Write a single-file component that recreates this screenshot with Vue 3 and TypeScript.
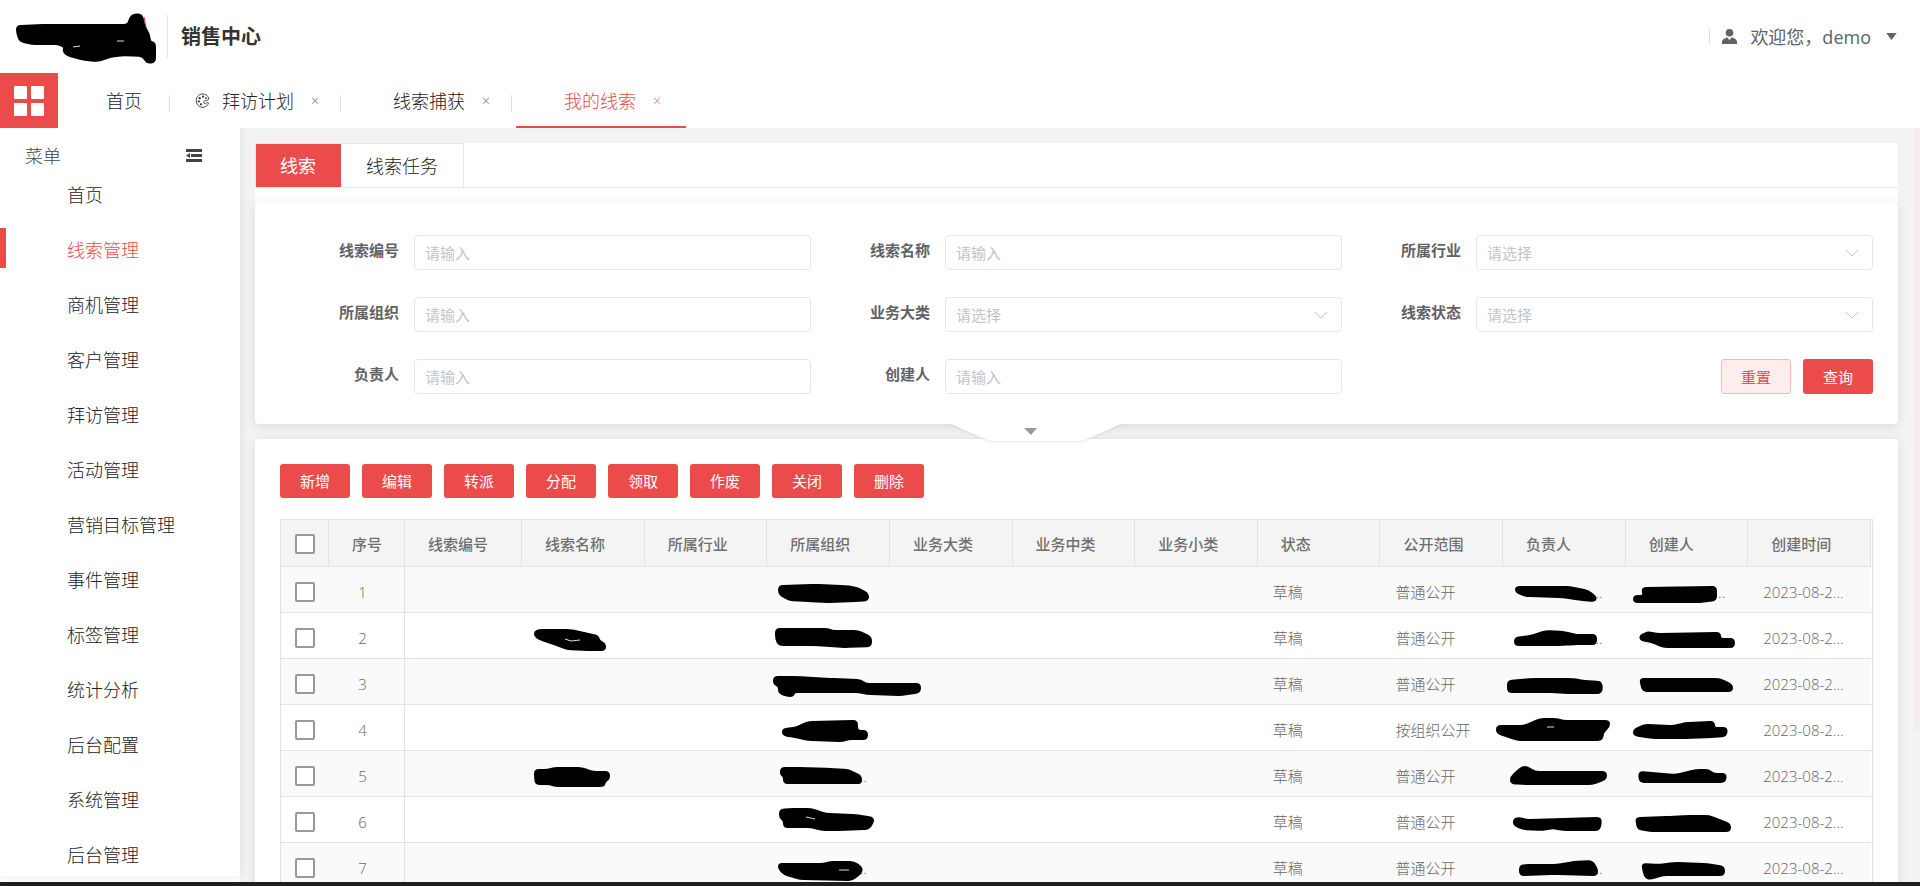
<script setup lang="ts">
import { ref } from 'vue'

interface PageTab {
  name: string
  icon?: boolean
  closable: boolean
}

interface Field {
  id: string
  label: string
  kind: 'input' | 'select'
}

interface Mark {
  shape: string
  gap?: string
  tail?: string
}

interface Lead {
  no: number
  name?: Mark
  org: Mark
  scope: string
  owner: Mark
  creator: Mark
}

// Turns a list of "x,y" corners into a closed outline with rounded corners.
function outline(points: string): string {
  const p = points.split(' ').map((s) => s.split(',').map(Number))
  const toward = (a: number[], b: number[]): string => {
    const len = Math.hypot(b[0] - a[0], b[1] - a[1]) || 1
    const t = Math.min(4, len / 2) / len
    return `${(a[0] + (b[0] - a[0]) * t).toFixed(1)} ${(a[1] + (b[1] - a[1]) * t).toFixed(1)}`
  }
  return p
    .map((c, i) => {
      const prev = p[(i + p.length - 1) % p.length]
      const next = p[(i + 1) % p.length]
      return `${i ? 'L' : 'M'}${toward(c, prev)}Q${c[0]} ${c[1]} ${toward(c, next)}`
    })
    .join('') + 'Z'
}

const logoShape =
  '17,26 47,25 128,25 130,18 134,14 142,15 144,26 149,34 150,42 155,43 155,52 155,62 147,63 143,56 122,55 110,57 98,61 85,60 66,55 63,50 65,47 58,44 32,44 20,41 17,33'

const pageTabs: PageTab[] = [
  { name: '首页', closable: false },
  { name: '拜访计划', icon: true, closable: true },
  { name: '线索捕获', closable: true },
  { name: '我的线索', closable: true },
]
const activePage = ref('我的线索')

const menu = [
  '首页', '线索管理', '商机管理', '客户管理', '拜访管理', '活动管理', '营销目标管理',
  '事件管理', '标签管理', '统计分析', '后台配置', '系统管理', '后台管理',
]
const activeMenu = ref('线索管理')

const panes = ['线索', '线索任务']
const activePane = ref('线索')

const fields: Field[] = [
  { id: 'code', label: '线索编号', kind: 'input' },
  { id: 'name', label: '线索名称', kind: 'input' },
  { id: 'industry', label: '所属行业', kind: 'select' },
  { id: 'org', label: '所属组织', kind: 'input' },
  { id: 'category', label: '业务大类', kind: 'select' },
  { id: 'status', label: '线索状态', kind: 'select' },
  { id: 'owner', label: '负责人', kind: 'input' },
  { id: 'creator', label: '创建人', kind: 'input' },
]

const actions = ['新增', '编辑', '转派', '分配', '领取', '作废', '关闭', '删除']

const headers = [
  '线索编号', '线索名称', '所属行业', '所属组织', '业务大类', '业务中类', '业务小类',
  '状态', '公开范围', '负责人', '创建人', '创建时间',
]

const leads: Lead[] = [
  {
    no: 1,
    scope: '普通公开',
    org: { shape: '12,19 48,18 78,19 91,21 101,27 101,33 92,34 59,35 41,34 22,33 12,27' },
    owner: { shape: '13,20 67,20 85,24 93,30 92,34 78,33 60,30 23,29 13,25', tail: '..' },
    creator: { shape: '16,21 90,20 90,33 74,35 29,35 8,35 8,29 18,29', tail: '..' },
  },
  {
    no: 2,
    scope: '普通公开',
    name: { shape: '13,19 17,17 48,17 76,23 77,28 83,31 83,37 65,37 45,36 29,30 17,26 13,23', gap: 'M43 26L49 28L58 27' },
    org: { shape: '9,16 61,16 65,18 91,18 104,24 104,33 78,34 48,32 12,32 9,26' },
    owner: { shape: '12,25 28,23 43,18 61,19 74,22 93,22 93,31 71,31 60,32 12,32', tail: '..' },
    creator: { shape: '14,23 22,19 31,21 94,20 94,26 108,26 108,34 37,34 26,29 15,27' },
  },
  {
    no: 3,
    scope: '普通公开',
    org: { shape: '7,18 30,18 63,20 94,21 98,25 153,25 153,33 135,36 100,35 92,33 27,33 26,37 20,37 12,34 12,27 7,25' },
    owner: { shape: '5,22 30,20 69,20 82,22 98,23 99,30 97,34 61,34 52,33 5,33' },
    creator: { shape: '14,20 94,20 106,26 106,32 17,32' },
  },
  {
    no: 4,
    scope: '按组织公开',
    org: { shape: '16,24 28,23 41,17 90,16 90,26 100,26 100,34 81,34 76,36 41,35 28,32 16,30' },
    owner: { shape: '-6,21 21,21 37,14 54,14 60,16 106,16 106,22 100,27 99,35 65,35 15,35 -6,28', gap: 'M44 22H51' },
    creator: { shape: '8,25 18,20 48,21 59,18 88,17 88,23 101,23 100,31 85,32 61,33 26,33 8,30' },
  },
  {
    no: 5,
    scope: '普通公开',
    name: { shape: '13,19 26,19 32,17 60,17 70,21 87,21 87,28 83,30 82,35 33,35 28,33 14,33 13,26' },
    org: { shape: '14,17 37,17 63,18 81,19 94,25 94,32 89,32 31,32 17,32 17,25 14,24', tail: '..' },
    owner: { shape: '8,26 19,16 24,16 32,21 103,21 103,28 89,33 19,33 8,32' },
    creator: { shape: '13,21 50,24 70,19 83,19 87,23 100,23 99,31 14,31' },
  },
  {
    no: 6,
    scope: '普通公开',
    org: { shape: '13,13 22,12 44,12 59,17 89,18 106,21 106,26 101,32 68,33 54,33 44,30 17,30 17,23 13,21', gap: 'M39 20L48 22' },
    owner: { shape: '11,22 17,21 23,23 97,21 98,26 96,33 60,33 50,31 39,33 20,32 11,28' },
    creator: { shape: '10,21 44,20 61,19 83,19 104,27 104,34 26,34 12,32' },
  },
  {
    no: 7,
    scope: '普通公开',
    org: { shape: '12,21 18,21 57,21 63,19 87,19 95,25 94,30 85,37 33,36 17,31 12,26', gap: 'M72 27H82', tail: '..' },
    owner: { shape: '17,23 23,22 54,22 71,19 89,18 94,26 94,32 52,31 17,32', tail: '..' },
    creator: { shape: '16,21 33,22 48,20 81,21 98,24 98,32 37,32 24,36 19,34' },
  },
]
</script>

<template>
  <div class="page">
    <header class="top">
      <svg class="logo" viewBox="0 0 167 73" aria-hidden="true">
        <path class="red" d="M144 17L146 28" />
        <path class="ink" :d="outline(logoShape)" />
        <path class="hole" d="M73 47L80 46M117 41H124" />
      </svg>
      <h1>销售中心</h1>
      <div class="user">
        <svg class="person" viewBox="0 0 15 15" aria-hidden="true">
          <circle cx="7.500" cy="3.800" r="3.800" />
          <path d="M0 15V12.500Q.3 10.500 2.500 9.500L5.300 8.300L7.500 11L9.700 8.300L12.500 9.500Q14.700 10.500 15 12.500V15Z" />
        </svg>
        <span>欢迎您，demo</span>
        <svg class="caret" viewBox="0 0 12 8" aria-hidden="true"><path d="M0 0H12L6 8Z" /></svg>
      </div>
    </header>

    <nav class="tabs">
      <button class="apps" aria-label="应用"><i v-for="n in 4" :key="n"></i></button>
      <div
        v-for="tab in pageTabs"
        :key="tab.name"
        class="tab"
        :class="{ active: tab.name === activePage, home: !tab.closable }"
      >
        <span class="tab-icon">
          <svg v-if="tab.icon" viewBox="0 0 16 16" aria-hidden="true">
            <path d="M14.300 5C12.900 1.500 8.500-.2 4.900 1.900C1.200 4.100.2 8.800 2.500 12.200C4.800 15.600 9.600 16.300 12.500 13.700C13.800 12.500 15.300 9.800 13.400 10C12 10.200 11.600 12 10.100 11.300C8.700 10.500 9.300 8.300 11 8.100C12.600 7.900 15.200 8 14.300 5Z" />
            <circle cx="5" cy="5.500" r="1.200" /><circle cx="8.600" cy="3.800" r="1.200" /><circle cx="11.600" cy="5.600" r="1" /><circle cx="4" cy="9" r="1.200" /><circle cx="6.300" cy="12" r="1.200" />
          </svg>
        </span>
        <a href="#" @click.prevent="activePage = tab.name">{{ tab.name }}</a>
        <button v-if="tab.closable" class="close" aria-label="关闭标签">×</button>
      </div>
    </nav>

    <div class="body">
      <div class="side-wrap">
        <aside class="side">
          <div class="side-head">
            <span>菜单</span>
            <svg viewBox="0 0 16 14" aria-hidden="true">
              <path d="M0 0H16V3H0ZM5 5H16V8H5ZM0 10H16V13H0ZM0 6.500L4 4V9Z" />
            </svg>
          </div>
          <a
            v-for="item in menu"
            :key="item"
            href="#"
            :class="{ active: item === activeMenu }"
            @click.prevent="activeMenu = item"
          >{{ item }}</a>
        </aside>
      </div>

      <main class="main">
        <div class="panes">
          <button
            v-for="pane in panes"
            :key="pane"
            :class="{ active: pane === activePane }"
            @click="activePane = pane"
          >{{ pane }}</button>
        </div>

        <form class="card filter" @submit.prevent>
          <div v-for="f in fields" :key="f.id" class="field">
            <label :for="f.id">{{ f.label }}</label>
            <input v-if="f.kind === 'input'" :id="f.id" type="text" placeholder="请输入" />
            <div v-else class="select">
              <select :id="f.id"><option>请选择</option></select>
              <svg viewBox="0 0 14 8" aria-hidden="true"><path d="M1 1L7 7L13 1" /></svg>
            </div>
          </div>
          <div class="submit">
            <button type="reset" class="btn plain">重置</button>
            <button type="submit" class="btn">查询</button>
          </div>
          <button type="button" class="fold" aria-label="展开">
            <svg viewBox="0 0 174 18" aria-hidden="true">
              <path class="flap" d="M0 0H174L141 15Q135 18 128 18H46Q39 18 33 15Z" />
              <path class="tip" d="M75 5H88L82 12Z" />
            </svg>
          </button>
        </form>

        <section class="card list">
          <div class="actions">
            <button v-for="a in actions" :key="a" class="btn">{{ a }}</button>
          </div>
          <table>
            <colgroup>
              <col class="c-check" /><col class="c-no" /><col class="c-code" />
              <col v-for="n in 11" :key="n" />
            </colgroup>
            <thead>
              <tr>
                <th class="check"><input type="checkbox" aria-label="全选" /></th>
                <th class="no">序号</th>
                <th v-for="h in headers" :key="h">{{ h }}</th>
              </tr>
            </thead>
            <tbody>
              <tr v-for="row in leads" :key="row.no">
                <td class="check"><input type="checkbox" :aria-label="`选择第${row.no}行`" /></td>
                <td class="no">{{ row.no }}</td>
                <td></td>
                <td class="mark">
                  <svg v-if="row.name" aria-hidden="true">
                    <path class="ink" :d="outline(row.name.shape)" />
                    <path v-if="row.name.gap" class="hole" :d="row.name.gap" />
                  </svg>
                </td>
                <td></td>
                <td class="mark">
                  {{ row.org.tail }}
                  <svg aria-hidden="true">
                    <path class="ink" :d="outline(row.org.shape)" />
                    <path v-if="row.org.gap" class="hole" :d="row.org.gap" />
                  </svg>
                </td>
                <td></td>
                <td></td>
                <td></td>
                <td>草稿</td>
                <td>{{ row.scope }}</td>
                <td v-for="(m, k) in [row.owner, row.creator]" :key="k" class="mark">
                  {{ m.tail }}
                  <svg aria-hidden="true">
                    <path class="ink" :d="outline(m.shape)" />
                    <path v-if="m.gap" class="hole" :d="m.gap" />
                  </svg>
                </td>
                <td>2023-08-2...</td>
              </tr>
            </tbody>
          </table>
        </section>
      </main>
      <div class="rail"><i></i></div>
    </div>
    <footer class="strip"></footer>
  </div>
</template>

<style>
body {
  margin: 0;
}
</style>

<style scoped>
* {
  box-sizing: border-box;
}
.page {
  height: 100vh;
  display: flex;
  flex-direction: column;
  overflow: hidden;
  background: #fff;
  color: #222;
  font: 300 18px/24px "Open Sans", "Noto Sans CJK SC", sans-serif;
}
button,
input,
select {
  font: inherit;
}
button {
  border: 0;
  padding: 0;
  background: none;
  color: inherit;
  cursor: pointer;
}
a {
  color: inherit;
  text-decoration: none;
}
svg {
  display: block;
}
.ink {
  fill: #000;
  stroke: #000;
  stroke-width: 2;
  stroke-linejoin: round;
}
.hole {
  fill: none;
  stroke: #ddd;
}

.top {
  flex: none;
  height: 73px;
  display: flex;
  align-items: center;
}
.logo {
  width: 167px;
  height: 73px;
}
.red {
  stroke: #e02020;
}
.top h1 {
  margin: 0;
  height: 43px;
  padding-left: 13px;
  border-left: 1px solid #e4e4e4;
  color: #333;
  font-size: 20px;
  line-height: 44px;
  font-weight: 700;
}
.user {
  margin-left: auto;
  margin-right: 23px;
  display: flex;
  align-items: center;
  color: #606266;
}
.user::before {
  content: "";
  width: 1px;
  height: 15px;
  margin-right: 12px;
  background: #dcdfe6;
}
.person {
  width: 15px;
  height: 15px;
  margin-right: 13px;
  fill: #606266;
}
.user span {
  font-weight: 400;
}
.caret {
  width: 11px;
  height: 7px;
  margin-left: 15px;
  fill: #606266;
}

.tabs {
  flex: none;
  height: 55px;
  display: flex;
}
.apps {
  width: 58px;
  height: 55px;
  padding: 13px 14px;
  display: grid;
  grid-template-columns: 13px 13px;
  grid-auto-rows: 13px;
  gap: 4px;
  background: #ec4b4b;
}
.apps i {
  border-radius: 1px;
  background: #fff;
}
.tab {
  position: relative;
  width: 171px;
  padding-left: 25px;
  display: flex;
  align-items: center;
}
.tab.home {
  width: 112px;
  padding-left: 21px;
}
.tab:not(.active)::after {
  content: "";
  position: absolute;
  right: 0;
  top: 22px;
  width: 1px;
  height: 17px;
  background: #dcdfe6;
}
.tab.active {
  color: #ec4b4b;
}
.tab.active::after {
  content: "";
  position: absolute;
  left: 4px;
  bottom: 0;
  width: 170px;
  height: 2px;
  background: #ec4b4b;
}
.tab-icon {
  width: 27px;
}
.tab-icon svg {
  width: 15px;
  height: 15px;
  fill: #333;
}
.tab-icon path {
  fill: none;
  stroke: #333;
}
.close {
  width: 12px;
  margin-left: 15px;
  font-size: 14px;
  color: #777;
}
.active .close {
  color: #ec7777;
}

.body {
  flex: 1;
  min-height: 0;
  display: flex;
  overflow: hidden;
}
.side-wrap {
  width: 240px;
  flex: none;
  padding-bottom: 6px;
  position: relative;
  z-index: 1;
}
.side {
  height: 100%;
  overflow: hidden;
  background: #fff;
  box-shadow: 0 0 10px rgba(0, 0, 0, 0.1);
  clip-path: inset(0 -10px -10px 0);
}
.side-head {
  height: 40px;
  padding: 16px 38px 0 25px;
  display: flex;
  justify-content: space-between;
  align-items: center;
  color: #444;
}
.side-head svg {
  width: 16px;
  height: 14px;
  fill: #444;
}
.side a {
  position: relative;
  display: block;
  height: 55px;
  padding-left: 67px;
  line-height: 55px;
}
.side a.active {
  color: #ec4b4b;
}
.side a.active::before {
  content: "";
  position: absolute;
  left: 0;
  top: 5px;
  width: 6px;
  height: 40px;
  background: #ec4b4b;
}

.main {
  flex: 1;
  min-width: 0;
  padding: 15px 16px 0 15px;
  background: #f3f3f3;
}
.rail {
  width: 6px;
  background: #f3f3f3;
}
.rail i {
  display: block;
  height: 80%;
  border-radius: 0 0 3px 3px;
  background: #f4eded;
}
.panes {
  height: 60px;
  display: flex;
  align-items: flex-start;
  background: linear-gradient(#e4e7ed, #e4e7ed) 0 44px / 100% 1px no-repeat #fff;
}
.panes button {
  height: 44px;
  padding: 0 25px;
  border-top: 1px solid #e4e7ed;
  border-right: 1px solid #e4e7ed;
}
.panes button.active {
  padding-left: 24px;
  border-left: 1px solid #e4e7ed;
  border-right: 0;
  background: #ec4b4b;
  color: #fff;
  font-weight: 400;
}
.card {
  border-radius: 4px;
  background: #fff;
  box-shadow: 0 2px 12px rgba(0, 0, 0, 0.1);
}
.filter {
  position: relative;
  z-index: 1;
  display: grid;
  grid-template-columns: repeat(3, 1fr);
  row-gap: 27px;
  padding: 32px 25px 30px;
}
.field {
  display: grid;
  grid-template-columns: 119px 1fr;
  column-gap: 15px;
  font-size: 15px;
}
.field label {
  line-height: 31px;
  text-align: right;
  font-weight: 700;
  color: #606266;
}
.field input,
.select select {
  width: 100%;
  height: 35px;
  padding: 0 10px;
  border: 1px solid #e6e6e9;
  border-radius: 4px;
  background: #fff;
  outline: 0;
  font-weight: 400;
}
.field input::placeholder {
  color: #c0c4cc;
  opacity: 1;
}
.select {
  position: relative;
}
.select select {
  appearance: none;
  color: #c0c4cc;
}
.select svg {
  position: absolute;
  right: 14px;
  top: 14px;
  width: 14px;
  height: 8px;
  fill: none;
  stroke: #c0c4cc;
  pointer-events: none;
}
.submit {
  display: flex;
  justify-content: flex-end;
  gap: 12px;
}
.btn {
  width: 70px;
  height: 35px;
  border-radius: 3px;
  background: #ec4b4b;
  color: #fff;
  font-size: 15px;
  font-weight: 400;
}
.btn.plain {
  border: 1px solid #f7b7b7;
  background: #fdeded;
  color: #ec4b4b;
}
.fold {
  position: absolute;
  left: calc(50% - 128px);
  bottom: -17px;
  width: 174px;
  height: 18px;
}
.fold svg {
  width: 174px;
  height: 18px;
  overflow: visible;
}
.flap {
  fill: #fff;
  filter: drop-shadow(0 1px 1px rgba(0, 0, 0, 0.1));
}
.tip {
  fill: #999;
}

.list {
  margin-top: 15px;
  padding: 25px 25px 0;
}
.actions {
  display: flex;
  gap: 12px;
  padding-bottom: 21px;
}
.actions .btn {
  height: 34px;
}
table {
  width: 100%;
  table-layout: fixed;
  border-collapse: separate;
  border-spacing: 0;
  border: 1px solid #dfe2ea;
  border-width: 1px 1px 0;
  padding-right: 1px;
  font-size: 15px;
  color: #666;
}
.c-check {
  width: 48px;
}
.c-no {
  width: 76px;
}
.c-code {
  width: 117px;
}
th,
td {
  text-align: left;
  white-space: nowrap;
  border-bottom: 1px solid #dfe2ea;
}
th {
  height: 47px;
  padding: 1px 0 0 23px;
  border-right: 1px solid #dfe2ea;
  background: #f4f4f4;
  font-weight: 500;
  color: #707070;
}
td {
  height: 46px;
  padding: 5px 0 0 15px;
}
tbody tr:nth-child(odd) {
  background: #fafafa;
}
td.no {
  padding: 5px 8px 0 0;
  text-align: center;
  border-right: 1px solid #dfe2ea;
}
.check,
td.check {
  padding-left: 14px;
}
.check input {
  appearance: none;
  display: block;
  width: 20px;
  height: 20px;
  margin: 0;
  border: 2px solid #999;
  border-radius: 2px;
  background: #fff;
}
.mark {
  position: relative;
  padding-right: 23px;
  text-align: right;
}
.mark svg {
  position: absolute;
  left: 0;
  top: 0;
  width: 100%;
  height: 100%;
  overflow: visible;
}
.strip {
  flex: none;
  position: relative;
  z-index: 2;
  height: 4px;
  background: #1e1e1e;
}
</style>
